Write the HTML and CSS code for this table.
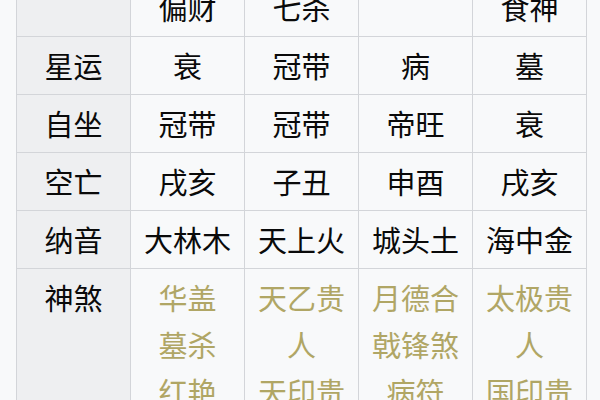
FILE: index.html
```html
<!DOCTYPE html>
<html lang="zh">
<head>
<meta charset="utf-8">
<link rel="stylesheet" href="styles.css">
</head>
<body>
<div class="page">
<table class="bazi">
<tr><th></th><td>偏财</td><td>七杀</td><td></td><td>食神</td></tr>
<tr><th>星运</th><td>衰</td><td>冠带</td><td>病</td><td>墓</td></tr>
<tr><th>自坐</th><td>冠带</td><td>冠带</td><td>帝旺</td><td>衰</td></tr>
<tr><th>空亡</th><td>戌亥</td><td>子丑</td><td>申酉</td><td>戌亥</td></tr>
<tr><th>纳音</th><td>大林木</td><td>天上火</td><td>城头土</td><td>海中金</td></tr>
<tr class="gods"><th>神煞</th>
<td>华盖<br>墓杀<br>红艳</td>
<td>天乙贵人<br>天印贵人</td>
<td>月德合<br>戟锋煞<br>病符</td>
<td>太极贵人<br>国印贵人</td></tr>
</table>
</div>
</body>
</html>
```
FILE: styles.css
```css
html, body {
  margin: 0;
  padding: 0;
  background: #f8f9fa;
  overflow: hidden;
}
.page {
  padding-left: 16px;
  height: 400px;
  overflow: hidden;
}
.bazi {
  border-collapse: collapse;
  margin-top: -22px;
  table-layout: fixed;
  width: 571px;
  font-family: "Noto Sans CJK SC", "Noto Sans", sans-serif;
  font-size: 29px;
  line-height: 47px;
  color: #0a0a0a;
}
.bazi th, .bazi td {
  border: 1px solid #d3d5d9;
  padding: 5px 4px;
  text-align: center;
  vertical-align: top;
  font-weight: normal;
  width: 105px;
}
.bazi th {
  background: #eeeff1;
}
.bazi td {
  background: #f8f9fa;
}
.gods td {
  color: #b0a665;
}
```
